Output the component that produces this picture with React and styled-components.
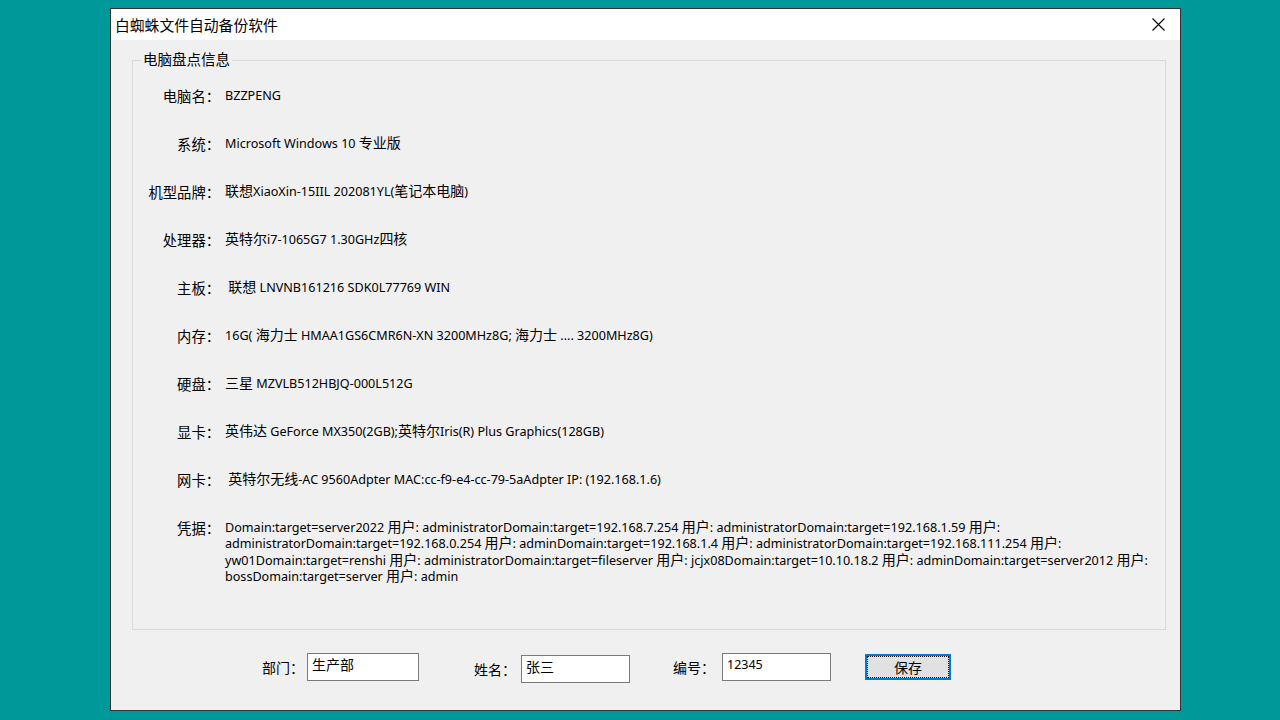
import styled, { createGlobalStyle } from 'styled-components';

const GlobalStyle = createGlobalStyle`
  html, body {
    margin: 0;
    padding: 0;
    background: #009999;
  }

  body {
    font-family: "Noto Sans", "Noto Sans CJK SC", sans-serif;
    color: #000;
  }
`;

const Desktop = styled.div`
  width: 1280px;
  height: 720px;
  padding: 8px 0 0 110px;
  box-sizing: border-box;
`;

const Window = styled.div`
  display: flex;
  flex-direction: column;
  width: 1071px;
  height: 703px;
  box-sizing: border-box;
  border: 1px solid #333;
  background: #f0f0f0;
`;

const TitleBar = styled.div`
  display: flex;
  align-items: center;
  justify-content: space-between;
  height: 31px;
  padding: 0 15px 0 4px;
  background: #fff;
`;

const TitleText = styled.span`
  font-family: "Noto Sans CJK SC", sans-serif;
  font-size: 14.8px;
  line-height: 1;
  padding-top: 1px;
`;

const CloseButton = styled.button`
  display: flex;
  align-items: center;
  justify-content: center;
  width: 14px;
  height: 14px;
  padding: 0;
  border: none;
  background: transparent;
`;

const GroupBox = styled.div`
  position: relative;
  margin: 20px 14px 0 21px;
  height: 570px;
  box-sizing: border-box;
  padding-top: 11px;
  border: 1px solid #dcdcdc;
`;

const GroupLegend = styled.span`
  position: absolute;
  top: -11px;
  left: 8px;
  padding: 0 2px;
  background: #f0f0f0;
  font-family: "Noto Sans CJK SC", sans-serif;
  font-size: 14.5px;
  line-height: 18px;
`;

const InfoRow = styled.div`
  display: flex;
  align-items: flex-start;
  min-height: 48px;
  padding-top: 16px;
  box-sizing: border-box;
`;

const InfoLabel = styled.span`
  flex: 0 0 87px;
  text-align: right;
  font-family: "Noto Sans CJK SC", sans-serif;
  font-size: 14.3px;
  line-height: 16px;
  white-space: nowrap;
`;

const InfoValue = styled.span`
  margin-left: 5px;
  font-size: 12.6px;
  line-height: 16.3px;
  white-space: pre;
`;

const ValueLine = styled.span`
  display: block;
`;

// Windows draws the Chinese glyphs of a value a size up from the Latin ones
const CjkRun = styled.span`
  font-family: "Noto Sans CJK SC", sans-serif;
  font-size: 14px;
  line-height: 8px;
`;

const BottomBar = styled.div`
  display: flex;
  align-items: flex-start;
  margin-top: 23px;
  padding-left: 151px;
`;

const Field = styled.div`
  display: flex;
  align-items: center;
  margin-left: ${({ $gap }) => $gap}px;
  margin-top: ${({ $drop }) => $drop || 0}px;
`;

const FieldLabel = styled.span`
  font-family: "Noto Sans CJK SC", sans-serif;
  font-size: 14px;
  margin-right: ${({ $space }) => $space}px;
  white-space: nowrap;
`;

const TextBox = styled.input`
  width: ${({ $width }) => $width}px;
  height: 28px;
  box-sizing: border-box;
  padding: 0 4px 6px;
  border: 1px solid #7a7a7a;
  background: #fff;
  font-family: "Noto Sans", "Noto Sans CJK SC", sans-serif;
  font-size: ${({ $size }) => $size || 14}px;
  color: #000;
  outline: none;
`;

const SaveButton = styled.button`
  margin-left: 34px;
  margin-top: 1px;
  width: 86px;
  height: 26px;
  padding: 0;
  box-sizing: border-box;
  border: 2px solid #0078d7;
  background: #e1e1e1;
  outline: 1px dotted #000;
  outline-offset: -3px;
  font-family: "Noto Sans CJK SC", sans-serif;
  font-size: 14px;
  color: #000;
`;

const infoRows = [
  { label: '电脑名：', value: 'BZZPENG' },
  { label: '系统：', value: 'Microsoft Windows 10 专业版' },
  { label: '机型品牌：', value: '联想XiaoXin-15IIL 202081YL(笔记本电脑)' },
  { label: '处理器：', value: '英特尔i7-1065G7 1.30GHz四核' },
  { label: '主板：', value: ' 联想 LNVNB161216 SDK0L77769 WIN' },
  { label: '内存：', value: '16G( 海力士 HMAA1GS6CMR6N-XN 3200MHz8G; 海力士 .... 3200MHz8G)' },
  { label: '硬盘：', value: '三星 MZVLB512HBJQ-000L512G' },
  { label: '显卡：', value: '英伟达 GeForce MX350(2GB);英特尔Iris(R) Plus Graphics(128GB)' },
  { label: '网卡：', value: ' 英特尔无线-AC 9560Adpter MAC:cc-f9-e4-cc-79-5aAdpter IP: (192.168.1.6)' },
];

const credentialLines = [
  'Domain:target=server2022 用户: administratorDomain:target=192.168.7.254 用户: administratorDomain:target=192.168.1.59 用户:',
  'administratorDomain:target=192.168.0.254 用户: adminDomain:target=192.168.1.4 用户: administratorDomain:target=192.168.111.254 用户:',
  'yw01Domain:target=renshi 用户: administratorDomain:target=fileserver 用户: jcjx08Domain:target=10.10.18.2 用户: adminDomain:target=server2012 用户:',
  'bossDomain:target=server 用户: admin',
];

const MixedText = ({ text }) =>
  text.split(/([\u3000-\u9fff]+)/).map((part, index) =>
    index % 2 === 1 ? <CjkRun key={index}>{part}</CjkRun> : part
  );

const App = () => (
  <Desktop>
    <GlobalStyle />
    <Window>
      <TitleBar>
        <TitleText>白蜘蛛文件自动备份软件</TitleText>
        <CloseButton aria-label="关闭">
          <svg width="13" height="13" viewBox="0 0 13 13">
            <path d="M0.5 0.5 L12.5 12.5 M12.5 0.5 L0.5 12.5" stroke="#000" strokeWidth="1.1" fill="none" />
          </svg>
        </CloseButton>
      </TitleBar>

      <GroupBox>
        <GroupLegend>电脑盘点信息</GroupLegend>
        {infoRows.map((row) => (
          <InfoRow key={row.label}>
            <InfoLabel>{row.label}</InfoLabel>
            <InfoValue>
              <MixedText text={row.value} />
            </InfoValue>
          </InfoRow>
        ))}
        <InfoRow>
          <InfoLabel>凭据：</InfoLabel>
          <InfoValue>
            {credentialLines.map((line) => (
              <ValueLine key={line}>
                <MixedText text={line} />
              </ValueLine>
            ))}
          </InfoValue>
        </InfoRow>
      </GroupBox>

      <BottomBar>
        <Field $gap={0}>
          <FieldLabel $space={3}>部门：</FieldLabel>
          <TextBox $width={112} defaultValue="生产部" />
        </Field>
        <Field $gap={55} $drop={2}>
          <FieldLabel $space={5}>姓名：</FieldLabel>
          <TextBox $width={109} defaultValue="张三" />
        </Field>
        <Field $gap={43}>
          <FieldLabel $space={7}>编号：</FieldLabel>
          <TextBox $width={109} $size={12.5} defaultValue="12345" />
        </Field>
        <SaveButton>保存</SaveButton>
      </BottomBar>
    </Window>
  </Desktop>
);

export default App;
